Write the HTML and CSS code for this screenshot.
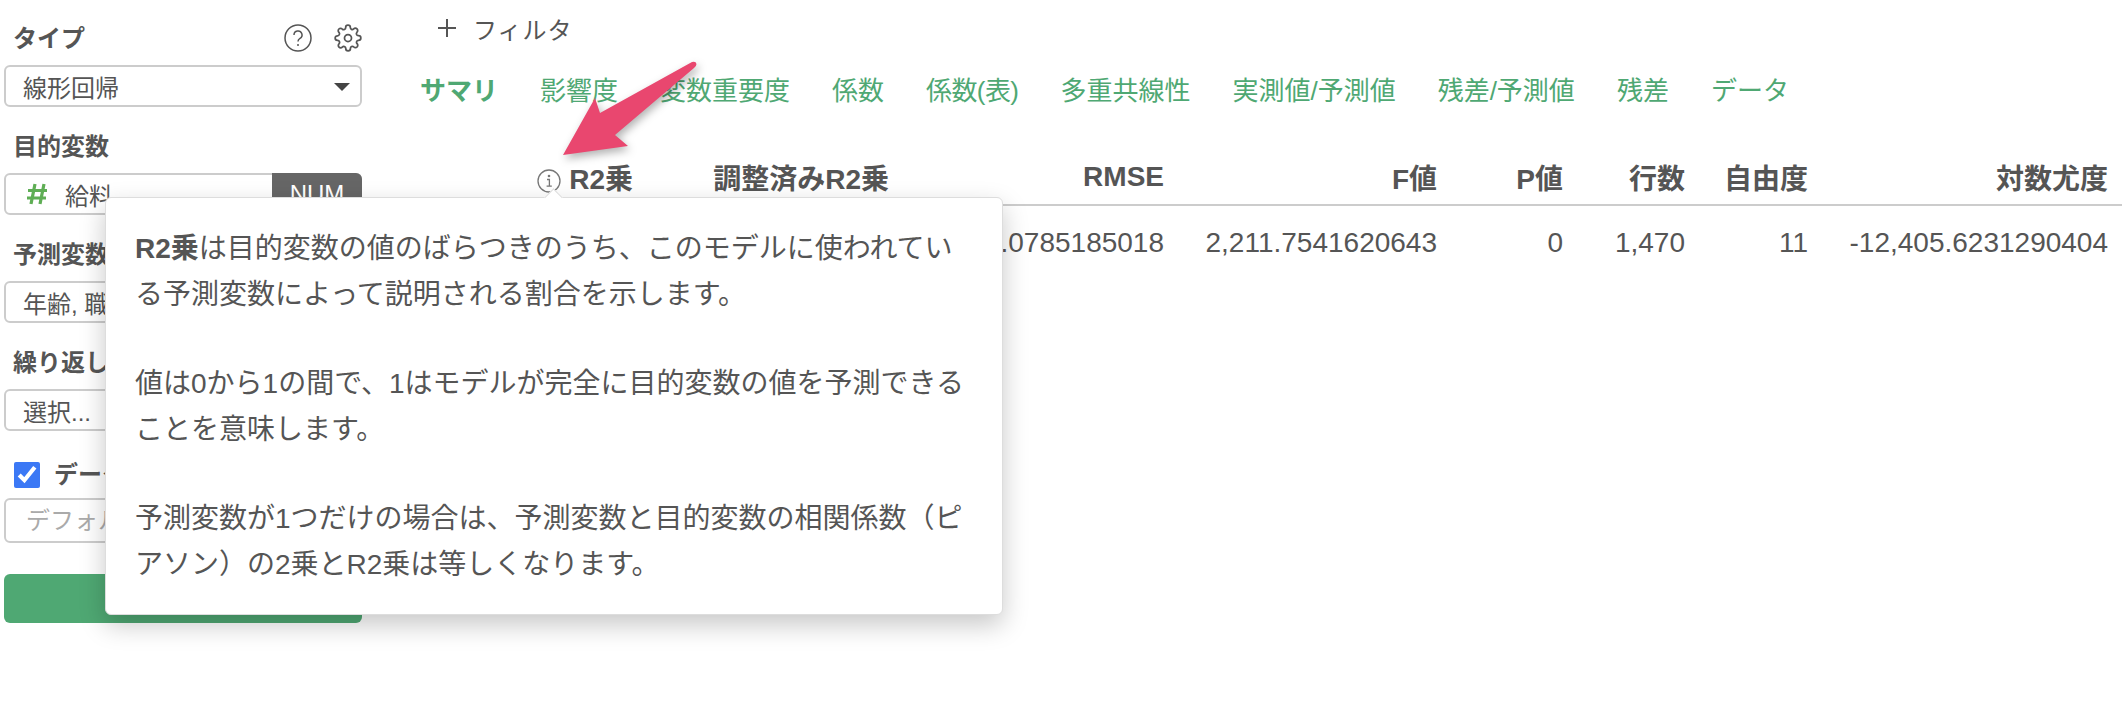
FILE: index.html
```html
<!DOCTYPE html>
<html lang="ja">
<head>
  <meta charset="UTF-8" />
  <title>線形回帰 サマリ</title>
  <link rel="stylesheet" href="styles.css">
</head>
<body>
  <div class="page">
    <aside class="sidebar">
      <div class="group">
        <div class="label-row">
          <label class="label">タイプ</label>
          <div class="tools">
            <svg class="tool-icon" viewBox="0 0 28 28"><circle cx="14" cy="14" r="13"/><path d="M10 11a4 4 0 1 1 6 3.4c-1.3.8-2 1.5-2 3"/><circle class="dot" cx="14" cy="21" r="1"/></svg>
            <svg class="tool-icon gear" viewBox="0 0 24 24"><circle cx="12" cy="12" r="3"/><path d="M19.4 15a1.65 1.65 0 0 0 .33 1.82l.06.06a2 2 0 0 1 0 2.83 2 2 0 0 1-2.83 0l-.06-.06a1.65 1.65 0 0 0-1.82-.33 1.65 1.65 0 0 0-1 1.51V21a2 2 0 0 1-2 2 2 2 0 0 1-2-2v-.09A1.65 1.65 0 0 0 9 19.4a1.65 1.65 0 0 0-1.82.33l-.06.06a2 2 0 0 1-2.83 0 2 2 0 0 1 0-2.83l.06-.06a1.65 1.65 0 0 0 .33-1.82 1.65 1.65 0 0 0-1.51-1H3a2 2 0 0 1-2-2 2 2 0 0 1 2-2h.09A1.65 1.65 0 0 0 4.6 9a1.65 1.65 0 0 0-.33-1.82l-.06-.06a2 2 0 0 1 0-2.83 2 2 0 0 1 2.83 0l.06.06a1.65 1.65 0 0 0 1.82.33H9a1.65 1.65 0 0 0 1-1.51V3a2 2 0 0 1 2-2 2 2 0 0 1 2 2v.09a1.65 1.65 0 0 0 1 1.51 1.65 1.65 0 0 0 1.82-.33l.06-.06a2 2 0 0 1 2.83 0 2 2 0 0 1 0 2.83l-.06.06a1.65 1.65 0 0 0-.33 1.82V9a1.65 1.65 0 0 0 1.51 1H21a2 2 0 0 1 2 2 2 2 0 0 1-2 2h-.09a1.65 1.65 0 0 0-1.51 1z"/></svg>
          </div>
        </div>
        <div class="field">線形回帰<span class="caret"></span></div>
      </div>

      <div class="group">
        <label class="label">目的変数</label>
        <div class="field field-num">
          <svg class="hash" viewBox="0 0 22 22"><path d="M9 1 L5 21 M18 1 L14 21 M2 7.500 H21 M1 15 H20"/></svg>
          <span class="field-value">給料</span>
          <span class="badge">NUM</span>
        </div>
      </div>

      <div class="group">
        <label class="label">予測変数</label>
        <div class="field">年齢, 職種</div>
      </div>

      <div class="group">
        <label class="label">繰り返し</label>
        <div class="field">選択...</div>
      </div>

      <label class="check-row">
        <input type="checkbox" checked />
        <span class="label">データ</span>
      </label>
      <input class="text-input" type="text" placeholder="デフォルト" />

      <button class="run-btn"></button>
    </aside>

    <main class="main">
      <div class="filter">
        <svg class="plus" viewBox="0 0 20 20"><path d="M10 1v18M1 10h18"/></svg>
        <span>フィルタ</span>
      </div>

      <nav class="tabs">
        <a class="tab active">サマリ</a>
        <a class="tab">影響度</a>
        <a class="tab">変数重要度</a>
        <a class="tab">係数</a>
        <a class="tab tab-tight">係数(表)</a>
        <a class="tab">多重共線性</a>
        <a class="tab">実測値/予測値</a>
        <a class="tab">残差/予測値</a>
        <a class="tab">残差</a>
        <a class="tab">データ</a>
      </nav>

      <table class="summary">
        <colgroup>
          <col class="c1"><col class="c2"><col class="c3"><col class="c4">
          <col class="c5"><col class="c6"><col class="c7"><col class="c8">
        </colgroup>
        <thead>
          <tr>
            <th>
              <svg class="info" viewBox="0 0 24 24"><circle cx="12" cy="12" r="11"/><path d="M10 10.5h2.4V17M9.6 17.2h5.2"/><circle class="dot" cx="12" cy="7" r="1.3"/></svg>
              R2乗
            </th>
            <th>調整済みR2乗</th>
            <th>RMSE</th>
            <th>F値</th>
            <th>P値</th>
            <th>行数</th>
            <th>自由度</th>
            <th>対数尤度</th>
          </tr>
        </thead>
        <tbody>
          <tr>
            <td></td>
            <td></td>
            <td>.0785185018</td>
            <td>2,211.7541620643</td>
            <td>0</td>
            <td>1,470</td>
            <td>11</td>
            <td>-12,405.6231290404</td>
          </tr>
        </tbody>
      </table>
    </main>

    <div class="popover">
      <p><b>R2乗</b>は目的変数の値のばらつきのうち、このモデルに使われている予測変数によって説明される割合を示します。</p>
      <p>値は0から1の間で、1はモデルが完全に目的変数の値を予測できることを意味します。</p>
      <p>予測変数が1つだけの場合は、予測変数と目的変数の相関係数（ピアソン）の2乗とR2乗は等しくなります。</p>
    </div>

    <svg class="arrow" viewBox="0 0 150 110" width="150" height="110">
      <path d="M47 59 L139 8 Q143 7 143.500 10 Q143.500 12 141 14 L62 81 L75 92 L10 101 L42 44 Z"/>
    </svg>
  </div>
</body>
</html>
```

FILE: styles.css
```css
* { box-sizing: border-box; }
html, body { margin: 0; padding: 0; background: #fff; }
body {
  font-family: "Liberation Sans", "Noto Sans CJK JP", sans-serif;
  font-size: 24px; color: #555;
}
.page { position: relative; display: flex; width: 2122px; height: 708px; overflow: hidden; }

/* sidebar */
.sidebar { flex: 0 0 400px; width: 400px; padding: 22px 38px 0 4px; }
.group { margin-bottom: 23px; }
.label-row { display: flex; align-items: center; justify-content: space-between; }
.label { display: block; height: 34px; line-height: 34px; padding-left: 9px; margin-bottom: 9px; font-size: 24px; font-weight: bold; }
.tools { display: flex; align-items: center; gap: 22px; margin-bottom: 11px; }
.tool-icon { width: 28px; height: 28px; fill: none; stroke: #555; stroke-width: 1.5; }
.tool-icon .dot { fill: #555; stroke: none; }
.field {
  position: relative; display: flex; align-items: center; height: 42px; padding-left: 17px;
  border: 2px solid #ccc; border-radius: 6px; font-size: 24px; background: #fff;
}
.caret {
  position: absolute; right: 10px; top: 16px; width: 0; height: 0;
  border-left: 8px solid transparent; border-right: 8px solid transparent; border-top: 8px solid #444;
}
.field-num { padding-left: 20px; }
.hash { flex: 0 0 22px; width: 22px; height: 22px; margin-right: 17px; fill: none; stroke: #5fae55; stroke-width: 3.2; }
.field-value { flex: 1; }
.badge {
  align-self: stretch; width: 90px; margin: -2px -2px -2px 0; display: flex; align-items: center; justify-content: center;
  background: #666; color: #fff; border-radius: 0 6px 6px 0; font-size: 24px;
}
.check-row { display: flex; align-items: flex-start; height: 42px; padding: 8px 0 0 10px; margin-bottom: 2px; }
.check-row input { width: 26px; height: 26px; margin: 0; accent-color: #3b78f5; }
.check-row .label { padding-left: 14px; margin: -4px 0 0; }
.text-input {
  display: block; width: 100%; height: 45px; padding: 0 20px; border: 2px solid #ccc; border-radius: 6px;
  font-family: inherit; font-size: 24px; color: #555;
}
.text-input::placeholder { color: #aaa; }
.run-btn { display: block; width: 100%; height: 49px; margin-top: 31px; border: none; border-radius: 6px; background: #4fa873; }

/* main */
.main { flex: 1; padding: 11px 0 0 20px; min-width: 0; }
.filter { display: flex; align-items: center; gap: 16px; height: 34px; padding-left: 17px; font-size: 24px; letter-spacing: 1px; }
.plus { width: 20px; height: 20px; fill: none; stroke: #555; stroke-width: 2; }
.tabs { display: flex; gap: 42px; height: 36px; margin-top: 25px; align-items: center; }
.tab { color: #4fa873; font-size: 26px; white-space: nowrap; }
.tab.active { font-weight: bold; }
.tab-tight { letter-spacing: -.6px; }

.summary { table-layout: fixed; border-collapse: collapse; width: 1722px; margin: 43px 0 0 -20px; }
.c1 { width: 247px; } .c2 { width: 256px; } .c3 { width: 275px; } .c4 { width: 273px; }
.c5 { width: 126px; } .c6 { width: 122px; } .c7 { width: 123px; } .c8 { width: 300px; }
.summary th, .summary td { padding: 0 14px 0 0; text-align: right; white-space: nowrap; font-size: 28px; }
.summary th { height: 56px; font-weight: bold; border-bottom: 2px solid #ccc; }
.summary td { height: 72px; padding-top: 2px; }
.info { width: 24px; height: 24px; vertical-align: -4px; fill: none; stroke: #777; stroke-width: 1.3; }
.info .dot { fill: #777; stroke: none; }

/* tooltip over the table and the form */
.popover {
  position: absolute; left: 105px; top: 197px; width: 898px; padding: 28px 29px 26px;
  background: #fff; border: 1px solid #ddd; border-radius: 6px; box-shadow: 0 10px 26px rgba(0, 0, 0, .22);
  font-size: 28px; line-height: 46px;
}
.popover::before {
  content: ""; position: absolute; left: 441px; top: -7px; width: 12px; height: 12px;
  background: #fff; border-left: 1px solid #ddd; border-top: 1px solid #ddd; transform: rotate(45deg);
}
.popover p { margin: 0 0 43px; }
.popover p:last-child { margin-bottom: 0; }

/* annotation arrow */
.arrow { position: absolute; left: 553px; top: 54px; filter: drop-shadow(2px 4px 4px rgba(0, 0, 0, .3)); }
.arrow path { fill: #e9476f; }
```
